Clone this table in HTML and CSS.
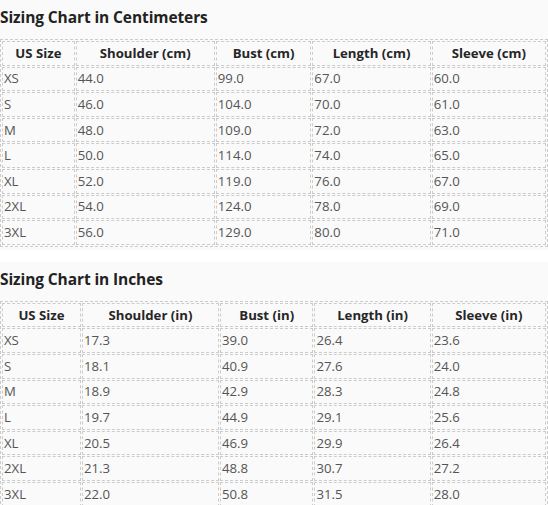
FILE: index.html
```html
<!DOCTYPE html>
<html>
<head>
<meta charset="utf-8">
<link rel="stylesheet" href="styles.css">
</head>
<body>
<div class="block">
  <h3 class="title">Sizing Chart in Centimeters</h3>
  <table class="chart">
    <colgroup><col class="c1"><col class="c2"><col class="c3"><col class="c4"><col class="c5"></colgroup>
    <thead><tr><th>US Size</th><th>Shoulder (cm)</th><th>Bust (cm)</th><th>Length (cm)</th><th>Sleeve (cm)</th></tr></thead>
    <tbody>
      <tr><td>XS</td><td>44.0</td><td>99.0</td><td>67.0</td><td>60.0</td></tr>
      <tr><td>S</td><td>46.0</td><td>104.0</td><td>70.0</td><td>61.0</td></tr>
      <tr><td>M</td><td>48.0</td><td>109.0</td><td>72.0</td><td>63.0</td></tr>
      <tr><td>L</td><td>50.0</td><td>114.0</td><td>74.0</td><td>65.0</td></tr>
      <tr><td>XL</td><td>52.0</td><td>119.0</td><td>76.0</td><td>67.0</td></tr>
      <tr><td>2XL</td><td>54.0</td><td>124.0</td><td>78.0</td><td>69.0</td></tr>
      <tr><td>3XL</td><td>56.0</td><td>129.0</td><td>80.0</td><td>71.0</td></tr>
    </tbody>
  </table>
</div>
<div class="block second">
  <h3 class="title">Sizing Chart in Inches</h3>
  <table class="chart">
    <colgroup><col class="d1"><col class="d2"><col class="d3"><col class="d4"><col class="d5"></colgroup>
    <thead><tr><th>US Size</th><th>Shoulder (in)</th><th>Bust (in)</th><th>Length (in)</th><th>Sleeve (in)</th></tr></thead>
    <tbody>
      <tr><td>XS</td><td>17.3</td><td>39.0</td><td>26.4</td><td>23.6</td></tr>
      <tr><td>S</td><td>18.1</td><td>40.9</td><td>27.6</td><td>24.0</td></tr>
      <tr><td>M</td><td>18.9</td><td>42.9</td><td>28.3</td><td>24.8</td></tr>
      <tr><td>L</td><td>19.7</td><td>44.9</td><td>29.1</td><td>25.6</td></tr>
      <tr><td>XL</td><td>20.5</td><td>46.9</td><td>29.9</td><td>26.4</td></tr>
      <tr><td>2XL</td><td>21.3</td><td>48.8</td><td>30.7</td><td>27.2</td></tr>
      <tr><td>3XL</td><td>22.0</td><td>50.8</td><td>31.5</td><td>28.0</td></tr>
    </tbody>
  </table>
</div>
</body>
</html>
```

FILE: styles.css
```css
html, body {
  margin: 0;
  padding: 0;
  background: #ffffff;
}
body {
  font-family: "Open Sans", "Noto Sans", sans-serif;
  color: #333;
}
.block {
  background: #fafafa;
  padding: 3px 0 3px 0;
}
.second {
  margin-top: 12px;
}
.title {
  margin: 0;
  padding: 0;
  height: 36px;
  line-height: 28px;
  font-size: 15.5px;
  font-weight: 700;
  color: #222;
  letter-spacing: -0.1px;
}
.chart {
  width: 548px;
  table-layout: fixed;
  border-collapse: separate;
  border-spacing: 1px;
  border: 1px dashed #ccc;
  box-sizing: border-box;
  font-size: 13.2px;
}
.chart th, .chart td {
  border: 1px dashed #ccc;
  height: 22.6px;
  padding: 0 1px;
  line-height: 19px;
}
.chart th {
  font-weight: 700;
  color: #262626;
  text-align: center;
}
.chart td {
  color: #555;
  text-align: left;
}
.c1 { width: 70px; }
.c2 { width: 134px; }
.c3 { width: 92px; }
.c4 { width: 114px; }
.c5 { width: 110px; }
.d1 { width: 76px; }
.d2 { width: 132px; }
.d3 { width: 90px; }
.d4 { width: 112px; }
.d5 { width: 110px; }
```
